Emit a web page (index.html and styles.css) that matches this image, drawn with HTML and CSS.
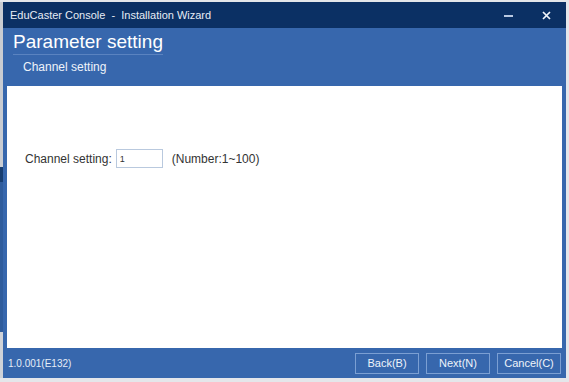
FILE: index.html
```html
<!DOCTYPE html>
<html lang="en">
<head>
<meta charset="UTF-8" />
<title>EduCaster Console - Installation Wizard</title>
<link rel="stylesheet" href="styles.css">
</head>
<body>

<div class="backdrop">
  <div class="strip"></div>
  <div class="window">
    <div class="titlebar">
      <span class="title">EduCaster Console &nbsp;-&nbsp; Installation Wizard</span>
      <span class="win-btn min"><span class="dash"></span></span>
      <span class="win-btn close">
        <svg width="9" height="9" viewBox="0 0 9 9"><path d="M1 1L8 8M8 1L1 8" stroke="#f2f5fa" stroke-width="1.7"/></svg>
      </span>
    </div>
    <div class="header">
      <h1>Parameter setting</h1>
      <h2>Channel setting</h2>
    </div>
    <div class="content">
      <div class="field">
        <label for="channel">Channel setting:</label>
        <input type="text" id="channel" value="1" />
        <span class="hint">(Number:1~100)</span>
      </div>
    </div>
    <div class="footer">
      <span class="version">1.0.001(E132)</span>
      <button class="btn">Back(B)</button>
      <button class="btn">Next(N)</button>
      <button class="btn">Cancel(C)</button>
    </div>
  </div>
</div>

</body>
</html>
```

FILE: styles.css
```css
body {
  margin: 0;
  padding: 0;
  font-family: "Liberation Sans", Arial, sans-serif;
  background: #e4e6ea;
}
.backdrop {
  display: flex;
  height: 382px;
  width: 569px;
  padding: 2px 3px 4px 0;
  box-sizing: border-box;
}
.strip {
  width: 3px;
  background: linear-gradient(#c9ccd2 0, #c9ccd2 165px, #173d70 165px, #173d70 180px, #2f5c9c 180px, #2f5c9c 330px, #cfd2d8 330px);
}
.window {
  flex: 1;
  display: flex;
  flex-direction: column;
  background: #3767ad;
}
.titlebar {
  height: 26px;
  background: #0b3064;
  color: #e6ecf5;
  display: flex;
  align-items: center;
  padding-left: 7px;
  font-size: 11px;
}
.title {
  flex: 1;
}
.win-btn {
  width: 38px;
  display: flex;
  justify-content: center;
  align-items: center;
}
.dash {
  width: 9px;
  height: 2px;
  background: #b9c9e2;
  margin-top: 2px;
}
.win-btn.close {
  margin-right: 1px;
}
.header {
  height: 58px;
  padding: 0 0 0 10px;
  color: #fff;
}
.header h1 {
  margin: 2px 0 0;
  font-size: 19px;
  font-weight: normal;
  display: inline-block;
  padding-bottom: 1px;
  border-bottom: 1px solid #5a83c0;
  line-height: 23px;
}
.header h2 {
  margin: 5px 0 0 10px;
  font-size: 12px;
  font-weight: normal;
  color: #eef3fa;
}
.content {
  flex: 1;
  background: #fff;
  margin: 0 4px;
  padding-top: 63px;
}
.field {
  display: flex;
  align-items: center;
  padding-left: 18px;
  font-size: 12px;
  color: #333;
}
.field input {
  width: 47px;
  height: 19px;
  box-sizing: border-box;
  margin: 0 9px 0 4px;
  border: 1px solid #b9c9de;
  font-family: "Liberation Sans", Arial, sans-serif;
  font-size: 9px;
  padding: 0 3px;
  color: #333;
}
.footer {
  height: 30px;
  display: flex;
  align-items: center;
  padding: 0 5px 0 5px;
  gap: 7px;
}
.version {
  flex: 1;
  color: #e6edf7;
  font-size: 10px;
}
.btn {
  width: 64px;
  height: 21px;
  background: #3767ad;
  border: 1px solid #7b9fd3;
  color: #eef3fa;
  font-family: "Liberation Sans", Arial, sans-serif;
  font-size: 11px;
  padding: 0;
}
```
